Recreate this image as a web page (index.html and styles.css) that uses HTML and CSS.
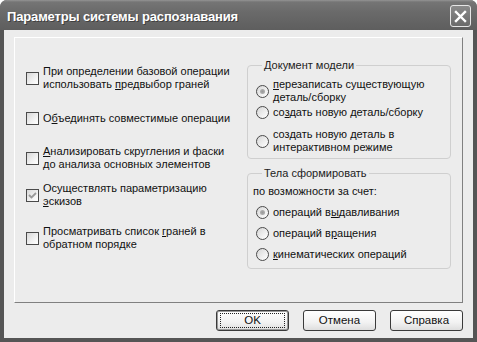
FILE: index.html
```html
<!DOCTYPE html>
<html>
<head>
    <title>Параметры системы распознавания</title>
    <link rel="stylesheet" href="styles.css">
</head>
<body>
    <div class="window">
        <div class="titlebar">
            <span class="title">Параметры системы распознавания</span>
            <div class="close-btn">
                <svg width="13" height="13" viewBox="0 0 13 13">
                    <path d="M2 2 L11 11 M11 2 L2 11" stroke="#fff" stroke-width="2.4" stroke-linecap="square"/>
                </svg>
            </div>
        </div>

        <div class="client">
            <div class="panel">
                <div class="options">
                    <div class="check-row row1">
                        <span class="checkbox"></span>
                        <span class="label">При определении базовой операции<br>использовать <u>п</u>редвыбор граней</span>
                    </div>
                    <div class="check-row row2">
                        <span class="checkbox"></span>
                        <span class="label">О<u>б</u>ъединять совместимые операции</span>
                    </div>
                    <div class="check-row row3">
                        <span class="checkbox"></span>
                        <span class="label"><u>А</u>нализировать скругления и фаски<br>до анализа основных элементов</span>
                    </div>
                    <div class="check-row row4">
                        <span class="checkbox checked">
                            <svg width="11" height="11" viewBox="0 0 11 11">
                                <path d="M2 5 L4.5 7.5 L9 3" stroke="#999" stroke-width="1.8" fill="none"/>
                            </svg>
                        </span>
                        <span class="label">Осуществлять параметризацию<br><u>э</u>скизов</span>
                    </div>
                    <div class="check-row row5">
                        <span class="checkbox"></span>
                        <span class="label">Просматривать список <u>г</u>раней в<br>обратном порядке</span>
                    </div>
                </div>

                <div class="groups">
                    <fieldset class="group group-doc">
                        <legend>Документ модели</legend>
                        <div class="radio-row r1">
                            <span class="radio selected"></span>
                            <span class="label"><u>п</u>ерезаписать существующую<br>деталь/сборку</span>
                        </div>
                        <div class="radio-row r2">
                            <span class="radio"></span>
                            <span class="label">со<u>з</u>дать новую деталь/сборку</span>
                        </div>
                        <div class="radio-row r3">
                            <span class="radio"></span>
                            <span class="label">создать новую <u>д</u>еталь в<br>интерактивном режиме</span>
                        </div>
                    </fieldset>

                    <fieldset class="group group-body">
                        <legend>Тела сформировать</legend>
                        <div class="note">по возможности за счет:</div>
                        <div class="radio-row">
                            <span class="radio selected"></span>
                            <span class="label">операций в<u>ы</u>давливания</span>
                        </div>
                        <div class="radio-row">
                            <span class="radio"></span>
                            <span class="label">операций в<u>р</u>ащения</span>
                        </div>
                        <div class="radio-row">
                            <span class="radio"></span>
                            <span class="label"><u>к</u>инематических операций</span>
                        </div>
                    </fieldset>
                </div>
            </div>

            <div class="buttons">
                <div class="btn default"><span class="focus">OK</span></div>
                <div class="btn">Отмена</div>
                <div class="btn">Справка</div>
            </div>
        </div>
    </div>
</body>
</html>
```

FILE: styles.css
```css
html, body {
    margin: 0;
    padding: 0;
    width: 477px;
    height: 342px;
    overflow: hidden;
    background-color: #fff;
}

body {
    font-family: "Liberation Sans", Arial, sans-serif;
    font-size: 11px;
    color: #111;
}

.window {
    width: 477px;
    height: 342px;
    box-sizing: border-box;
    padding: 0 4px 4px 4px;
    background-color: #555;
    border-radius: 7px 7px 0 0;
    display: flex;
    flex-direction: column;
}

.titlebar {
    height: 30px;
    margin: 0 -4px;
    padding: 0 6px 0 7px;
    border-radius: 7px 7px 0 0;
    background: linear-gradient(#949494 0, #757575 2px, #6a6a6a 40%, #5e5e5e 100%);
    display: flex;
    align-items: center;
    justify-content: space-between;
}

.title {
    color: #fff;
    font-weight: bold;
    font-size: 13px;
    letter-spacing: -0.15px;
    text-shadow: 1px 1px 0 #404040;
    margin-top: 2px;
}

.close-btn {
    width: 19px;
    height: 20px;
    border: 1px solid #e6e6e6;
    border-radius: 3px;
    background: linear-gradient(#8a8a8a, #6a6a6a);
    display: flex;
    align-items: center;
    justify-content: center;
    margin-top: 2px;
}

.client {
    flex: 1;
    background-color: #ececec;
    padding: 7px 10px 7px 10px;
    display: flex;
    flex-direction: column;
}

.panel {
    flex: 1;
    border: 1px solid;
    border-color: #fff #808080 #808080 #fff;
    display: flex;
}

.label {
    line-height: 13px;
    white-space: nowrap;
}

/* left column */
.options {
    width: 221px;
    padding-left: 11px;
    padding-top: 27px;
}

.check-row {
    display: flex;
    align-items: center;
}

.row2 { margin-top: 21px; }
.row3 { margin-top: 20px; }
.row4 { margin-top: 11px; }
.row5 { margin-top: 17px; }

.checkbox {
    width: 11px;
    height: 11px;
    border: 1px solid #4a4a4a;
    background: linear-gradient(135deg, #d8d8d8, #f6f6f6 70%, #fff);
    margin-right: 4px;
    flex-shrink: 0;
    display: flex;
    align-items: center;
    justify-content: center;
}

/* right column */
.groups {
    width: 204px;
}

.group {
    margin: 0;
    border: 1px solid #cfcfcf;
    border-radius: 4px;
    padding: 0 0 0 8px;
}

.group legend {
    padding: 0 2px;
    margin-left: 6px;
    line-height: 13px;
    color: #222;
}

.group-doc {
    margin-top: 21px;
    padding-top: 6px;
    padding-bottom: 4px;
}

.group-body {
    margin-top: 8px;
    padding-top: 5px;
    padding-bottom: 7px;
}

.radio-row {
    display: flex;
    align-items: center;
}

.group-doc .r2 { margin-top: 2px; }
.group-doc .r3 { margin-top: 9px; }

.group-body .radio-row { margin-top: 8px; }

.note {
    line-height: 13px;
    margin-left: -3px;
}

.radio {
    width: 11px;
    height: 11px;
    border: 1px solid #4a4a4a;
    border-radius: 50%;
    background: linear-gradient(135deg, #d6d6d6, #f4f4f4 70%, #fff);
    margin-right: 4px;
    flex-shrink: 0;
    position: relative;
}

.radio.selected::after {
    content: "";
    position: absolute;
    left: 3px;
    top: 3px;
    width: 5px;
    height: 5px;
    border-radius: 50%;
    background: radial-gradient(#9a9a9a, #b8b8b8);
}

/* buttons */
.buttons {
    margin-top: 7px;
    display: flex;
    justify-content: flex-end;
    gap: 14px;
}

.btn {
    width: 71px;
    height: 19px;
    border: 1px solid #3a3a3a;
    border-radius: 3px;
    background: linear-gradient(#fff, #f2f2f2 60%, #dedede);
    display: flex;
    align-items: center;
    justify-content: center;
    line-height: 13px;
    font-size: 11.5px;
}

.btn.default {
    box-shadow: inset 0 0 0 1px #9a9a9a;
}

.focus {
    width: 63px;
    height: 13px;
    border: 1px dotted #222;
    text-align: center;
}
```
